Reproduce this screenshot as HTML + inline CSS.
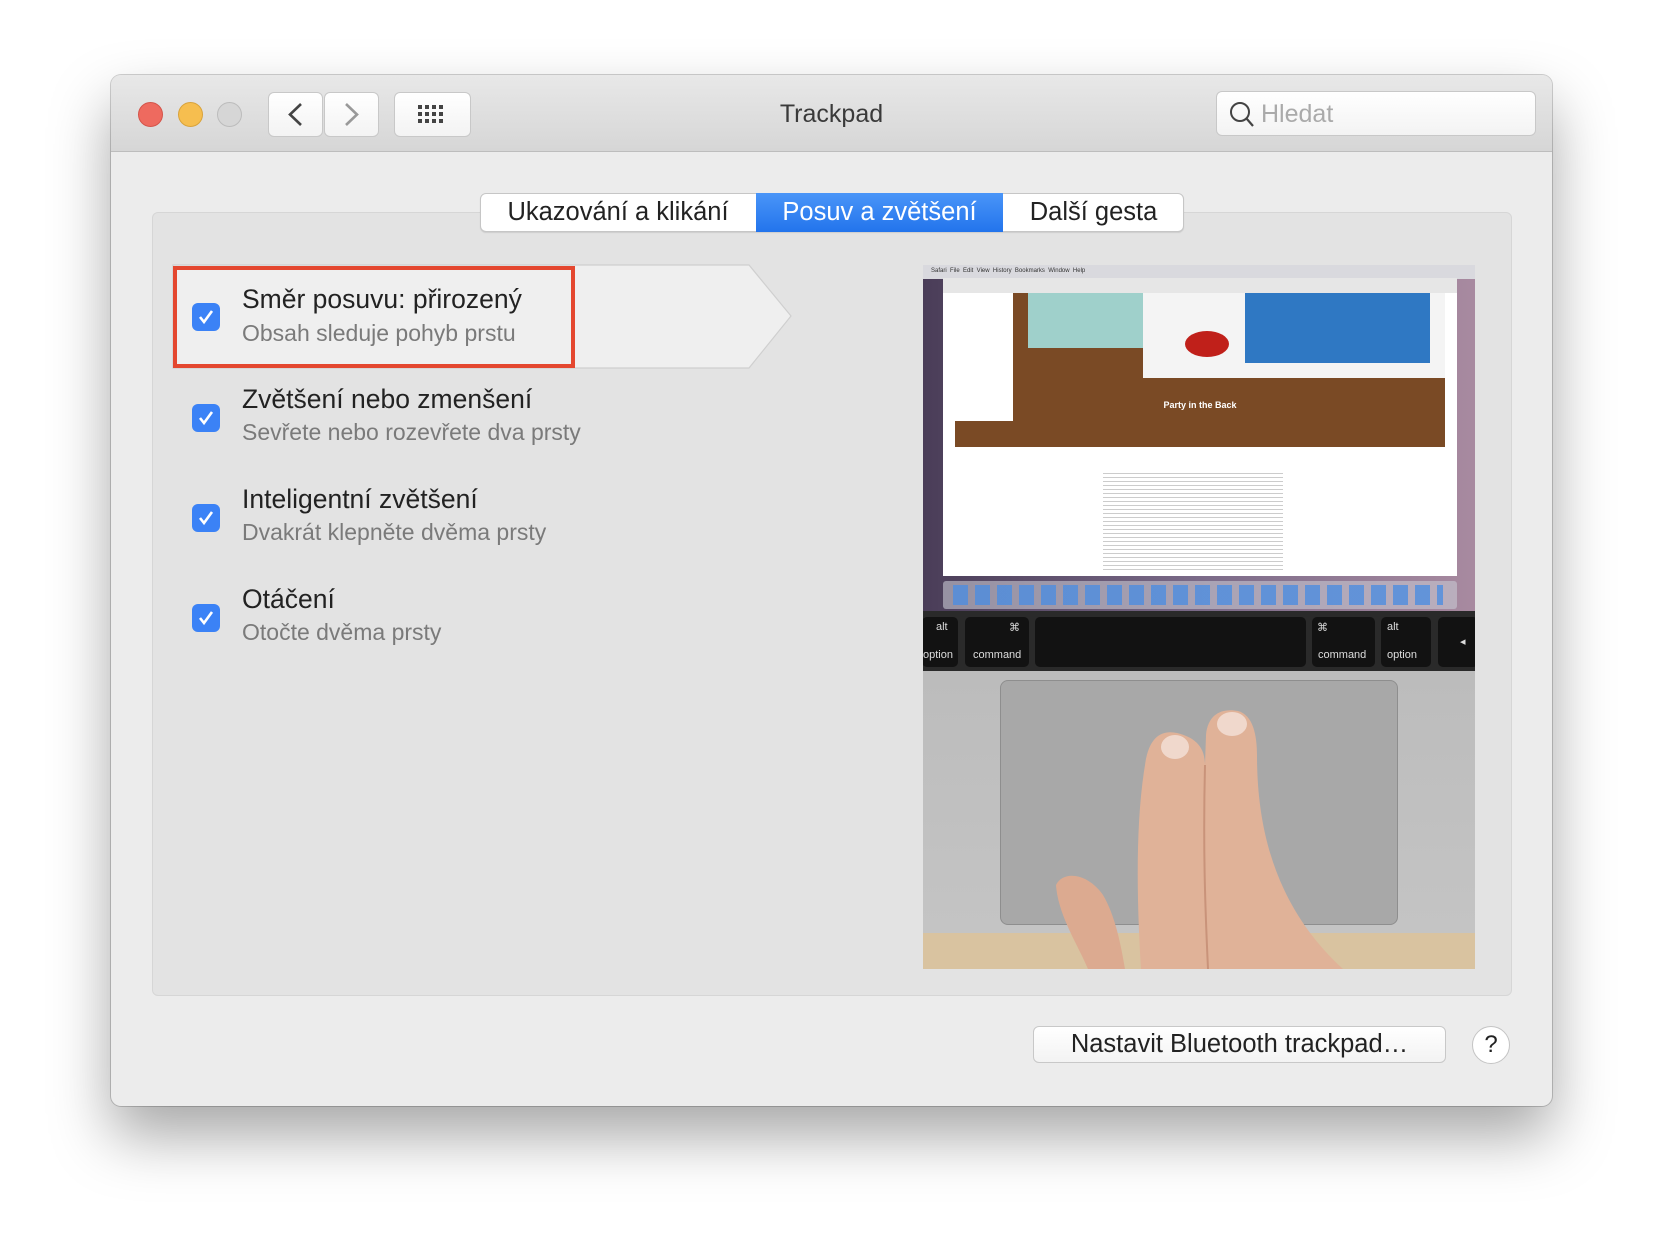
<!DOCTYPE html>
<html><head><meta charset="utf-8"><style>
*{margin:0;padding:0;box-sizing:border-box}
body{width:1664px;height:1254px;background:#fff;position:relative;overflow:hidden;font-family:"Liberation Sans",sans-serif}
.a{position:absolute}
#win{left:111px;top:75px;width:1441px;height:1031px;background:#ececec;border-radius:10px;box-shadow:0 30px 60px rgba(0,0,0,.35),0 0 0 1px rgba(0,0,0,.18);overflow:hidden}
#tb{left:0;top:0;width:1441px;height:77px;background:linear-gradient(#e8e8e8,#d6d6d6);border-bottom:1px solid #bdbdbd}
.dot{width:25px;height:25px;border-radius:50%}
.btn{background:linear-gradient(#fff,#f3f3f3);border:1px solid #c8c8c8;border-radius:6px}
.t{color:#222;font-size:26.5px;white-space:nowrap}
.s{color:#7a7a7a;font-size:23px;white-space:nowrap}
.cb{width:28px;height:28px;border-radius:6px;background:#3b82f6}
.key{background:#121212;border-radius:5px;color:#ddd;font-size:11px}
</style></head><body>
<div id="win" class="a">
 <div id="tb" class="a">
  <div class="a dot" style="left:27px;top:27px;background:#ee6a5f;border:1px solid #d4544a"></div>
  <div class="a dot" style="left:67px;top:27px;background:#f6be4f;border:1px solid #d9a33b"></div>
  <div class="a dot" style="left:106px;top:27px;background:#d6d6d6;border:1px solid #bcbcbc"></div>
  <div class="a btn" style="left:157px;top:17px;width:55px;height:45px"></div>
  <div class="a btn" style="left:213px;top:17px;width:55px;height:45px"></div>
  <svg class="a" style="left:157px;top:17px" width="111" height="45"><path d="M33 12 L22 22.5 L33 33" stroke="#444" stroke-width="2.6" fill="none"/><path d="M78 12 L89 22.5 L78 33" stroke="#999" stroke-width="2.6" fill="none"/></svg>
  <div class="a btn" style="left:283px;top:17px;width:77px;height:45px"></div>
  <svg class="a" style="left:283px;top:17px" width="77" height="45" fill="#444"><g>
   <rect x="24" y="13" width="4" height="4"/><rect x="31" y="13" width="4" height="4"/><rect x="38" y="13" width="4" height="4"/><rect x="45" y="13" width="4" height="4"/>
   <rect x="24" y="20" width="4" height="4"/><rect x="31" y="20" width="4" height="4"/><rect x="38" y="20" width="4" height="4"/><rect x="45" y="20" width="4" height="4"/>
   <rect x="24" y="27" width="4" height="4"/><rect x="31" y="27" width="4" height="4"/><rect x="38" y="27" width="4" height="4"/><rect x="45" y="27" width="4" height="4"/></g></svg>
  <div class="a" style="left:0;width:1441px;top:25px;text-align:center;font-size:25px;color:#3a3a3a">Trackpad</div>
  <div class="a btn" style="left:1105px;top:16px;width:320px;height:45px;border-radius:6px"></div>
  <svg class="a" style="left:1117px;top:25px" width="30" height="30"><circle cx="12" cy="12" r="9" stroke="#444" stroke-width="2" fill="none"/><path d="M18.5 18.5 L25 26" stroke="#444" stroke-width="2.2"/></svg>
  <div class="a" style="left:1150px;top:25px;font-size:25px;color:#aaa">Hledat</div>
 </div>
 <div class="a" style="left:41px;top:137px;width:1360px;height:784px;background:#e3e3e3;border:1px solid #d6d6d6;border-radius:6px"></div>
 <div class="a" style="left:369px;top:118px;width:704px;height:39px;background:#fff;border:1px solid #c6c6c6;border-radius:6px;box-shadow:0 1px 1px rgba(0,0,0,.1)"></div>
 <div class="a" style="left:645px;top:118px;width:247px;height:39px;background:linear-gradient(#4a95f8,#2374ec)"></div>
 <div class="a" style="left:369px;top:118px;width:276px;line-height:39px;text-align:center;font-size:25.5px;color:#222">Ukazování a klikání</div>
 <div class="a" style="left:645px;top:118px;width:247px;line-height:39px;text-align:center;font-size:25.5px;color:#fff">Posuv a zvětšení</div>
 <div class="a" style="left:892px;top:118px;width:181px;line-height:39px;text-align:center;font-size:25.5px;color:#222">Další gesta</div>
 <svg class="a" style="left:58px;top:188px" width="640" height="110"><path d="M4 2 H580 L622 53 L580 105 H4 Z" fill="#efefef" stroke="#cfcfcf" stroke-width="1.2"/></svg>
 <div class="a" style="left:62px;top:191px;width:402px;height:102px;border:4px solid #e4472f"></div>
 <div class="a cb" style="left:81px;top:228px"></div>
 <div class="a cb" style="left:81px;top:329px"></div>
 <div class="a cb" style="left:81px;top:429px"></div>
 <div class="a cb" style="left:81px;top:529px"></div>
 <svg class="a" style="left:81px;top:228px" width="28" height="330" stroke="#fff" stroke-width="2.6" fill="none"><path d="M8 14 L12 19 L20 8"/><path d="M8 115 L12 120 L20 109"/><path d="M8 215 L12 220 L20 209"/><path d="M8 315 L12 320 L20 309"/></svg>
 <div class="a t" style="left:131px;top:209px">Směr posuvu: přirozený</div>
 <div class="a s" style="left:131px;top:245px">Obsah sleduje pohyb prstu</div>
 <div class="a t" style="left:131px;top:309px">Zvětšení nebo zmenšení</div>
 <div class="a s" style="left:131px;top:344px">Sevřete nebo rozevřete dva prsty</div>
 <div class="a t" style="left:131px;top:409px">Inteligentní zvětšení</div>
 <div class="a s" style="left:131px;top:444px">Dvakrát klepněte dvěma prsty</div>
 <div class="a t" style="left:131px;top:509px">Otáčení</div>
 <div class="a s" style="left:131px;top:544px">Otočte dvěma prsty</div>

 <!-- illustration -->
 <div class="a" style="left:812px;top:190px;width:552px;height:704px;overflow:hidden;background:#bdbdbd">
  <div class="a" style="left:0;top:0;width:552px;height:346px;background:linear-gradient(90deg,#4a3d58,#7a6a88 50%,#a88aa0)"></div>
  <div class="a" style="left:0;top:0;width:552px;height:14px;background:#d9d9de;font-size:6px;color:#333;padding:3px 8px">Safari&nbsp; File&nbsp; Edit&nbsp; View&nbsp; History&nbsp; Bookmarks&nbsp; Window&nbsp; Help</div>
  <div class="a" style="left:20px;top:13px;width:514px;height:298px;background:#fff"></div>
  <div class="a" style="left:20px;top:13px;width:514px;height:15px;background:#e6e6e6"></div>
  <div class="a" style="left:32px;top:28px;width:490px;height:154px;background:#7a4a25"></div>
  <div class="a" style="left:32px;top:28px;width:58px;height:128px;background:#fff"></div>
  <div class="a" style="left:105px;top:28px;width:115px;height:55px;background:#9fd0cb"></div>
  <div class="a" style="left:220px;top:28px;width:302px;height:85px;background:#f4f4f4"></div>
  <div class="a" style="left:322px;top:28px;width:185px;height:70px;background:#2f78c3"></div>
  <div class="a" style="left:262px;top:66px;width:44px;height:26px;border-radius:50%;background:#c0201a"></div>
  <div class="a" style="left:32px;top:135px;width:490px;text-align:center;color:#fff;font-size:9px;font-weight:bold">Party in the Back</div>
  <div class="a" style="left:180px;top:205px;width:180px;height:100px;background:repeating-linear-gradient(#fff 0 3px,#aaa 3px 4px);opacity:.6"></div>
  <div class="a" style="left:20px;top:316px;width:514px;height:28px;background:rgba(200,200,210,.6);border-radius:3px"></div>
  <div class="a" style="left:30px;top:320px;width:490px;height:20px;background:repeating-linear-gradient(90deg,#4d8de0 0 15px,transparent 15px 22px);opacity:.8"></div>
  <div class="a" style="left:0;top:346px;width:552px;height:60px;background:#2a2a2a"></div>
  <div class="a key" style="left:-1px;top:352px;width:36px;height:50px"><span class="a" style="left:14px;top:4px">alt</span><span class="a" style="left:1px;top:32px">option</span></div>
  <div class="a key" style="left:42px;top:352px;width:64px;height:50px"><span class="a" style="left:44px;top:4px">⌘</span><span class="a" style="left:8px;top:32px">command</span></div>
  <div class="a key" style="left:112px;top:352px;width:271px;height:50px"></div>
  <div class="a key" style="left:389px;top:352px;width:63px;height:50px"><span class="a" style="left:5px;top:4px">⌘</span><span class="a" style="left:6px;top:32px">command</span></div>
  <div class="a key" style="left:458px;top:352px;width:50px;height:50px"><span class="a" style="left:6px;top:4px">alt</span><span class="a" style="left:6px;top:32px">option</span></div>
  <div class="a key" style="left:515px;top:352px;width:40px;height:50px"><span class="a" style="left:22px;top:18px">◂</span></div>
  <div class="a" style="left:0;top:406px;width:552px;height:264px;background:linear-gradient(#bcbcbc,#c4c4c4)"></div>
  <div class="a" style="left:77px;top:415px;width:398px;height:245px;background:#a8a8a8;border:1px solid #8e8e8e;border-radius:8px"></div>
  <div class="a" style="left:0;top:668px;width:552px;height:36px;background:#d9c3a0"></div>
  <svg class="a" style="left:0;top:0" width="552" height="704">
   <path d="M218 704 C214 640 212 560 222 500 C226 470 240 465 254 468 C270 472 282 480 282 500 L283 470 C285 448 300 443 315 446 C330 450 334 470 334 490 C334 560 350 640 420 704 Z" fill="#e0b298"/>
   <path d="M282 500 C280 580 282 640 285 704" stroke="#c9937a" stroke-width="2" fill="none"/>
   <path d="M133 620 C140 605 165 608 180 630 C192 650 198 680 202 704 L165 704 C155 680 135 650 133 620 Z" fill="#dcaa90"/>
   <ellipse cx="252" cy="482" rx="14" ry="12" fill="#f0d8cc"/><ellipse cx="309" cy="459" rx="15" ry="12" fill="#f0d8cc"/>
  </svg>
 </div>

 <div class="a btn" style="left:922px;top:951px;width:413px;height:37px;text-align:center;line-height:35px;font-size:25.5px;color:#222">Nastavit Bluetooth trackpad…</div>
 <div class="a" style="left:1361px;top:951px;width:38px;height:38px;border-radius:50%;background:#fff;border:1px solid #c4c4c4;text-align:center;line-height:36px;font-size:24px;color:#222">?</div>
</div>
</body></html>
